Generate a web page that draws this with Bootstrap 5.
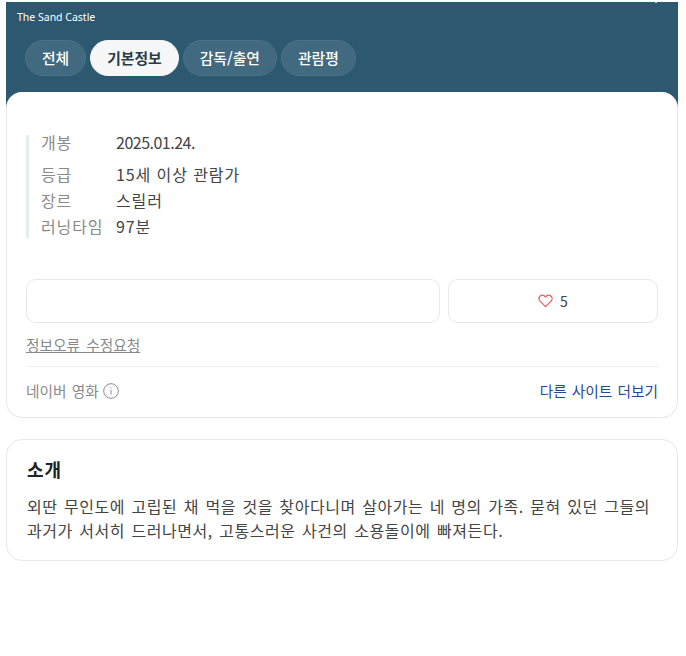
<!DOCTYPE html>
<html lang="ko">
<head>
<meta charset="utf-8">
<title>The Sand Castle</title>
<link href="https://cdn.jsdelivr.net/npm/bootstrap@5.3.0/dist/css/bootstrap.min.css" rel="stylesheet">
<style>
html,body{background:#fff;height:100%}
body{font-family:"Noto Sans CJK KR","Liberation Sans",sans-serif;color:#333}
.shell{padding:2px 8px 0 6px}
.hero{background:#2c5870;height:106px;padding:9px 0 0 11px;position:relative}
.hero-title{font-family:"Noto Sans","Liberation Sans",sans-serif;font-size:10.5px;line-height:12px;color:#fff}
.hero-dot{position:absolute;right:21px;top:0;width:2px;height:1px;background:#c8d4db}
.pills{margin-top:17px;margin-left:8px;gap:4px}
.pill{height:36px;border-radius:18px;background:#416a80;color:#fff;font-size:14.8px;font-weight:500;padding:0 16px;border:1px solid #4a7186;line-height:33px;text-decoration:none;white-space:nowrap}
.pill.on{background:#f5f7f9;color:#2b3a44;border-color:#f5f7f9;font-weight:700}
.panel{background:#fff;border:1px solid #e8e8e8;border-radius:16px}
.info-card{height:326px;padding:43px 19px 0;border-top:0;margin-top:-16px;position:relative}
.facts{border-left:3px solid #e9ecef;padding-left:12px;height:103px;font-size:16px;letter-spacing:.9px}
.fact{height:26px;line-height:26px}
.fact.first{height:26px;line-height:14px}
.fact-k{width:75px;color:#8a8a8a;flex:none}
.fact-v{color:#444}
.fact-date{letter-spacing:-.5px}
.acts{margin-top:41px;gap:8px;height:44px}
.act{border:1px solid #e8e8e8;border-radius:10px;background:#fff}
.act-wide{width:414px}
.act-like{width:210px;font-size:14px;color:#444;gap:7px}
.fix{display:block;margin-top:12px;font-size:14.7px;line-height:20px;color:#888;text-decoration:underline;word-spacing:2px}
.rule{border-top:1px solid #f0f0f0;margin-top:11px}
.foot{height:48px;font-size:14.7px;width:632px;word-spacing:1px}
.foot-l{color:#8a8a8a;gap:4px}
.foot-r{color:#1f4a91;text-decoration:none}
.intro{margin-top:21px;height:122px;padding:16px 20px 0 20px}
.intro-h{font-size:18px;font-weight:700;letter-spacing:1px;line-height:26px;color:#222;margin:0}
.intro-p{font-size:16px;line-height:24px;letter-spacing:.55px;word-spacing:1.4px;color:#444;margin:12px 0 0}
</style>
</head>
<body>
<div class="shell">
  <div class="hero">
    <div class="hero-title">The Sand Castle</div>
    <div class="hero-dot"></div>
    <div class="d-flex pills">
      <a class="pill" href="#">전체</a>
      <a class="pill on" href="#">기본정보</a>
      <a class="pill" href="#">감독/출연</a>
      <a class="pill" href="#">관람평</a>
    </div>
  </div>
  <div class="panel info-card">
    <div class="facts">
      <div class="d-flex fact first"><span class="fact-k">개봉</span><span class="fact-v fact-date">2025.01.24.</span></div>
      <div class="d-flex fact"><span class="fact-k">등급</span><span class="fact-v">15세 이상 관람가</span></div>
      <div class="d-flex fact"><span class="fact-k">장르</span><span class="fact-v">스릴러</span></div>
      <div class="d-flex fact"><span class="fact-k">러닝타임</span><span class="fact-v">97분</span></div>
    </div>
    <div class="d-flex acts">
      <div class="act act-wide"></div>
      <div class="act act-like d-flex align-items-center justify-content-center">
        <svg width="15" height="14" viewBox="0 0 16 15" fill="none" stroke="#e25c5c" stroke-width="1.3"><path d="M8 13.6 2.1 7.7C.6 6.2.6 3.8 2 2.4 3.5 1 5.8 1 7.2 2.4L8 3.2l.8-.8c1.4-1.4 3.7-1.4 5.2 0 1.4 1.4 1.4 3.8-.1 5.3z"/></svg>
        <span>5</span>
      </div>
    </div>
    <a class="fix" href="#">정보오류 수정요청</a>
    <div class="rule"></div>
    <div class="d-flex foot align-items-center justify-content-between">
      <span class="d-flex foot-l align-items-center">네이버 영화
        <svg width="16" height="16" viewBox="0 0 16 16" fill="none" stroke="#8a8a8a"><circle cx="8" cy="8" r="7.3"/><path d="M8 7v4.5M8 4.4v1.2"/></svg>
      </span>
      <a class="foot-r" href="#">다른 사이트 더보기</a>
    </div>
  </div>
  <div class="panel intro">
    <h2 class="intro-h">소개</h2>
    <p class="intro-p">외딴 무인도에 고립된 채 먹을 것을 찾아다니며 살아가는 네 명의 가족. 묻혀 있던 그들의 과거가 서서히 드러나면서, 고통스러운 사건의 소용돌이에 빠져든다.</p>
  </div>
</div>
<script src="https://cdn.jsdelivr.net/npm/bootstrap@5.3.0/dist/js/bootstrap.bundle.min.js"></script>
</body>
</html>
